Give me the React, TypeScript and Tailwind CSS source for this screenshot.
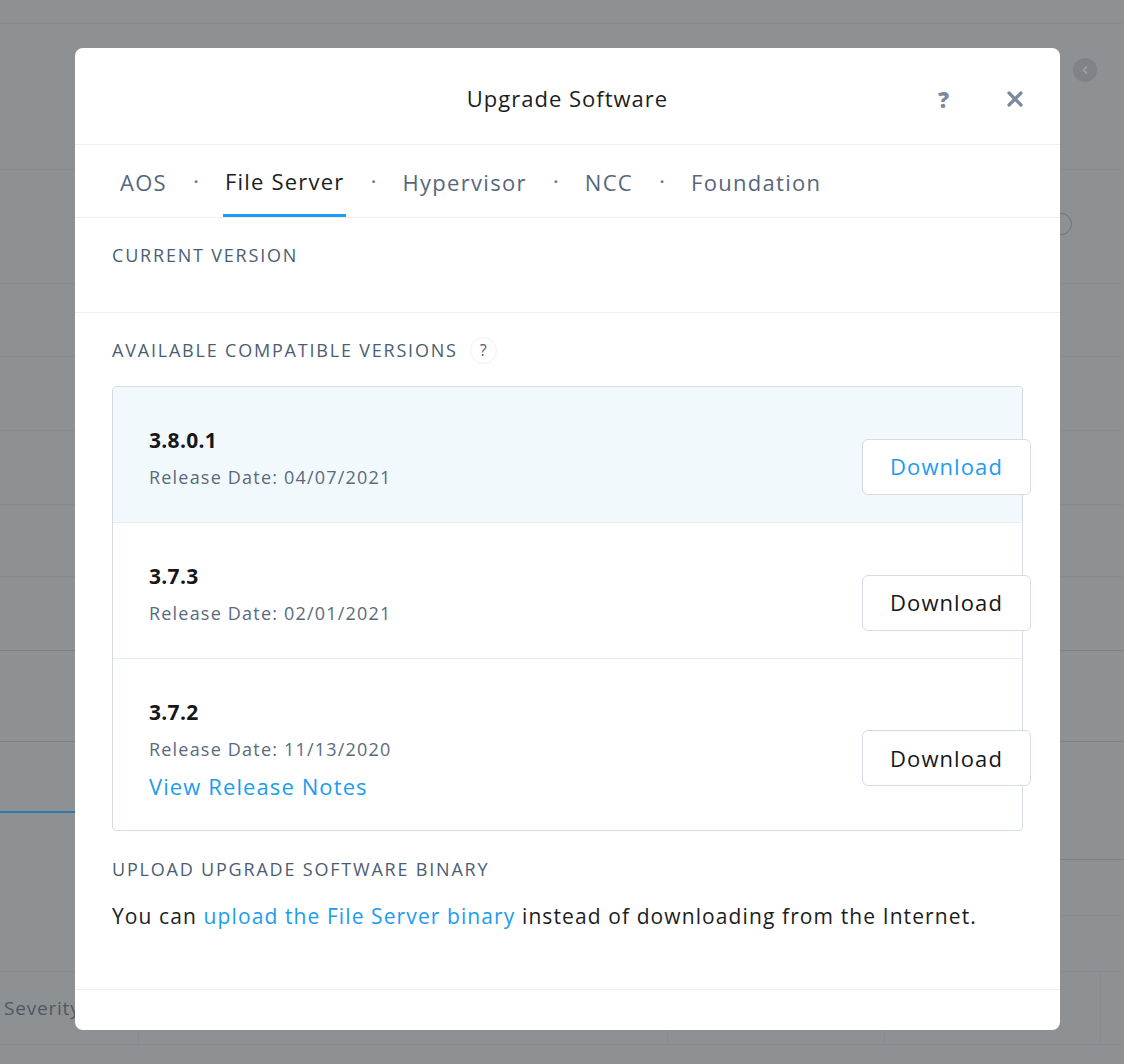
import React from 'react';

const font = { fontFamily: '"Open Sans", "Noto Sans", sans-serif' };

const versions = [
  { id: '3.8.0.1', date: '04/07/2021', active: true },
  { id: '3.7.3', date: '02/01/2021', active: false },
  { id: '3.7.2', date: '11/13/2020', active: false, notes: true },
];

const tabs = ['AOS', 'File Server', 'Hypervisor', 'NCC', 'Foundation'];

function Backdrop() {
  // the dimmed page behind the dialog
  const row = 'border-b border-[#878a8e]';
  const dark = 'border-b border-[#7c8084]';
  return (
    <div className="flex h-[1064px] w-full flex-col bg-[#8e9194]">
      <div className={`h-[24px] ${row}`} />
      <div className={`flex h-[146px] justify-end pr-[27px] pt-[34px] ${row}`}>
        <div className="flex h-[24px] w-[24px] items-center justify-center rounded-full bg-[#7f8388]">
          <svg width="10" height="10" viewBox="0 0 10 10" fill="none">
            <path d="M6.5 2 L3.5 5 L6.5 8" stroke="#9a9ea2" strokeWidth="1.8" strokeLinecap="round" strokeLinejoin="round" />
          </svg>
        </div>
      </div>
      <div className={`flex h-[114px] justify-end pr-[52px] pt-[43px] ${row}`}>
        <div className="h-[22px] w-[22px] rounded-full border border-[#6f7378]" />
      </div>
      <div className={`h-[73px] ${row}`} />
      <div className={`h-[74px] ${row}`} />
      <div className={`h-[74px] ${row}`} />
      <div className={`h-[72px] ${row}`} />
      <div className={`h-[74px] ${dark}`} />
      <div className={`h-[91px] ${dark}`} />
      <div className="flex h-[230px]">
        <div className="flex w-[560px] flex-col">
          <div className="h-[71px] border-b-2 border-[#2c79aa]" />
          <div className={`flex-1 ${row}`} />
        </div>
        <div className="flex flex-1 flex-col">
          <div className={`h-[118px] ${dark}`} />
          <div className={`h-[56px] ${row}`} />
          <div className={`flex-1 ${row}`} />
        </div>
      </div>
      <div className={`flex h-[73px] ${row}`}>
        <div className="flex w-[138px] items-center pl-[4px] text-[19px] tracking-[0.8px] text-[#4e5862]">Severity</div>
        <div className="w-[529px] border-l border-[#878a8e]" />
        <div className="w-[217px] border-l border-[#878a8e]" />
        <div className="w-[216px] border-l border-[#878a8e]" />
        <div className="flex-1 border-l border-[#878a8e]" />
      </div>
    </div>
  );
}

export default function App() {
  const label = 'text-[18px] leading-[24px] tracking-[1.8px] text-[#4b5d74]';
  return (
    <div className="relative h-[1064px] w-[1124px] overflow-hidden" style={font}>
      <Backdrop />

      <div className="absolute left-[75px] top-[48px] flex h-[982px] w-[985px] flex-col rounded-[8px] bg-white">
        {/* header */}
        <div className="relative flex h-[97px] items-center justify-center border-b border-[#eceef1] pt-[4px]">
          <h2 className="text-[22px] leading-[28px] tracking-[1px] text-[#1b1d21]">Upgrade Software</h2>
          <div className="absolute right-[36px] top-[40px] flex items-center gap-[57px]">
            <span className="text-[22px] font-extrabold leading-none text-[#7b899d]">?</span>
            <svg width="18" height="18" viewBox="0 0 18 18">
              <path d="M3 3 L15 15 M15 3 L3 15" stroke="#7b899d" strokeWidth="3.2" strokeLinecap="round" />
            </svg>
          </div>
        </div>

        {/* tabs */}
        <div className="flex h-[73px] items-stretch gap-[21px] border-b border-[#eceef1] pl-[45px]">
          {tabs.map((t, i) => (
            <React.Fragment key={t}>
              {i > 0 && <span className="flex w-[16px] items-center justify-center text-[16px] font-bold text-[#6b7a8f]">·</span>}
              <div
                className={
                  t === 'File Server'
                    ? '-mx-[2px] flex items-center border-b-[3px] border-[#1b9cf0] px-[2px] pt-[3px] text-[22px] tracking-[1.2px] text-[#1b1d21]'
                    : 'flex items-center pt-[3px] text-[22px] tracking-[1.3px] text-[#56677d]'
                }
              >
                {t}
              </div>
            </React.Fragment>
          ))}
        </div>

        {/* current version */}
        <div className="h-[95px] border-b border-[#eceef1] px-[37px] pt-[25px]">
          <p className={label}>CURRENT VERSION</p>
        </div>

        <div className="flex flex-1 flex-col px-[37px] pt-[23px]">
          <div className="flex h-[28px] items-center gap-[12px]">
            <p className={label}>AVAILABLE COMPATIBLE VERSIONS</p>
            <span className="flex h-[27px] w-[27px] items-center justify-center rounded-full border border-[#eef0f3] text-[16px] text-[#4b5d74]">?</span>
          </div>

          <div className="mt-[22px] rounded-[4px] border border-[#d6dbe2]">
            {versions.map((v, i) => (
              <div
                key={v.id}
                className={`flex items-center justify-between pl-[36px] ${i > 0 ? 'border-t border-[#e9ecf0]' : 'rounded-t-[4px]'} ${v.active ? 'bg-[#f2f9fd]' : ''} ${v.notes ? 'pb-[30px] pt-[39px]' : 'pb-[33px] pt-[39px]'}`}
              >
                <div className="flex flex-col">
                  <span className="text-[21px] font-bold leading-[28px] tracking-[0.3px] text-[#15171a]">{v.id}</span>
                  <span className="mt-[11px] text-[18px] leading-[24px] tracking-[1.2px] text-[#5a6a7e]">Release Date: {v.date}</span>
                  {v.notes && (
                    <span className="mt-[11px] text-[22px] leading-[28px] tracking-[1.1px] text-[#1b9cf0]">View Release Notes</span>
                  )}
                </div>
                <button
                  className={`-mr-[9px] h-[56px] w-[169px] translate-y-[9px] rounded-[6px] border border-[#d6dbe2] bg-white text-[22px] tracking-[1.1px] ${v.active ? 'text-[#1b9cf0]' : 'text-[#15171a]'}`}
                >
                  Download
                </button>
              </div>
            ))}
          </div>

          <p className={`mt-[26px] ${label}`}>UPLOAD UPGRADE SOFTWARE BINARY</p>
          <p className="mt-[21px] text-[21px] leading-[28px] tracking-[1.1px] text-[#1b1d21]">
            You can <span className="text-[#1b9cf0]">upload the File Server binary</span> instead of downloading from the Internet.
          </p>
        </div>

        <div className="h-[41px] border-t border-[#eceef1]" />
      </div>
    </div>
  );
}
